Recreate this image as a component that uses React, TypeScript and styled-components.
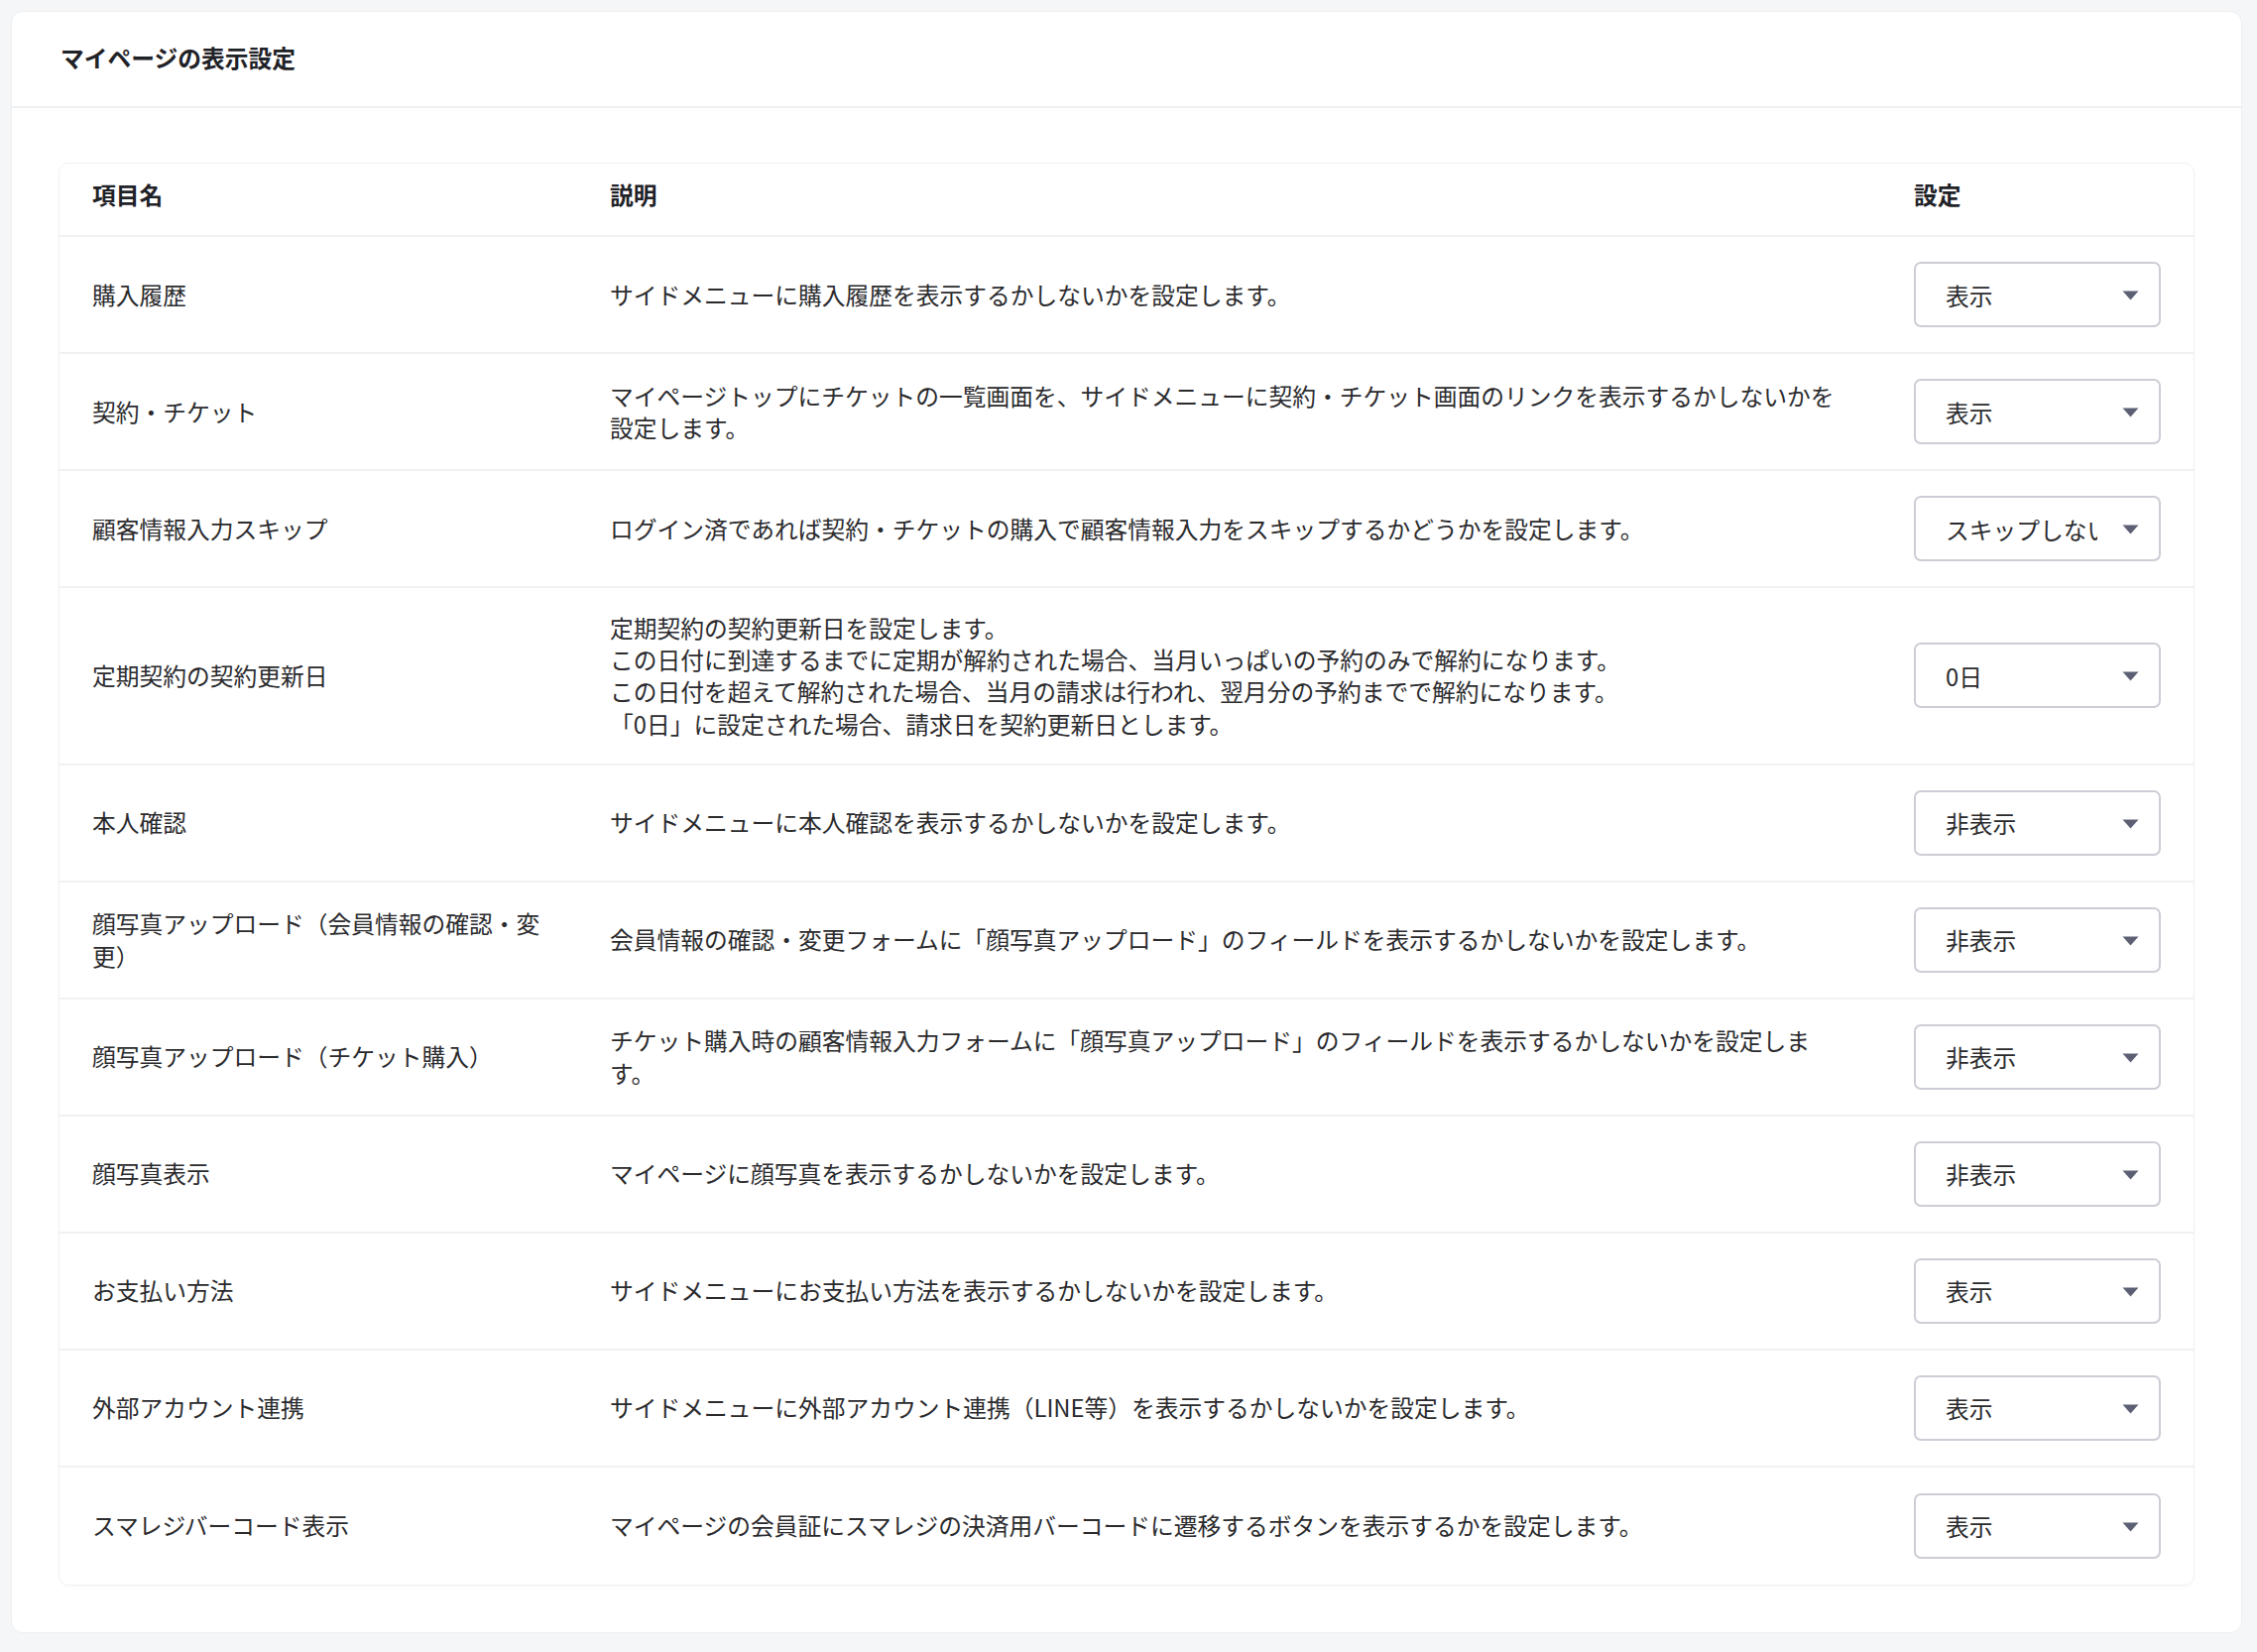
import React from "react";
import styled, { createGlobalStyle } from "styled-components";

const GlobalStyle = createGlobalStyle`
  *, *::before, *::after { box-sizing: border-box; }
  html, body { margin: 0; padding: 0; background: #f5f6f8; }
  body {
    font-family: "Noto Sans CJK JP", "Noto Sans", sans-serif;
    color: #2b2b2e;
  }
`;

const Page = styled.div`
  padding: 11px 15px 22px 11px;
  min-height: 1666px;
`;

const Card = styled.section`
  background: #ffffff;
  border: 1px solid #eceef1;
  border-radius: 12px;
  overflow: hidden;
`;

const CardHeader = styled.header`
  height: 97px;
  display: flex;
  align-items: center;
  padding-left: 49px;
  padding-bottom: 3px;
  border-bottom: 2px solid #eef0f3;
`;

const Title = styled.h1`
  margin: 0;
  font-size: 23.75px;
  font-weight: 700;
  color: #1f2227;
  line-height: 1;
`;

const CardBody = styled.div`
  padding: 55px 47px 47px 47px;
`;

const TableCard = styled.div`
  border: 1px solid #f1f1f4;
  border-radius: 10px;
  box-shadow: 0 1px 2px rgba(20, 20, 40, 0.03);
  overflow: hidden;
`;

const GridRow = styled.div<{ $head?: boolean; $last?: boolean }>`
  display: grid;
  grid-template-columns: 522px 1315px 1fr;
  align-items: center;
  min-height: ${(p) => (p.$head ? "74px" : "118px")};
  padding: ${(p) => (p.$head ? "0" : "23.5px 0")};
  border-bottom: ${(p) => (p.$last ? "none" : "2px solid #f1f1f4")};
`;

const HeadCell = styled.div`
  padding: 0 33px 9px 33px;
  font-size: 23.75px;
  font-weight: 700;
  color: #1f2227;
  line-height: 32.4px;
`;

const Cell = styled.div`
  padding: 0 33px;
  font-size: 23.75px;
  line-height: 32.4px;
  color: #2b2b2e;
  white-space: pre-line;
  line-break: strict;
`;

const SelectWrap = styled.div`
  position: relative;
  width: 249px;
  height: 66px;
`;

const Select = styled.select`
  appearance: none;
  -webkit-appearance: none;
  width: 100%;
  height: 100%;
  border: 2px solid #cdcdd6;
  border-radius: 7px;
  background: #ffffff;
  padding: 0 62px 0 30px;
  font-family: "Noto Sans CJK JP", "Noto Sans", sans-serif;
  font-size: 23.75px;
  color: #2b2b2e;
  outline: none;
`;

const Arrow = styled.svg`
  position: absolute;
  right: 22px;
  top: 50%;
  margin-top: -4px;
  width: 17px;
  height: 10px;
  pointer-events: none;
`;

type Item = { name: string; desc: string; value: string; options: string[] };

const showOpts = ["表示", "非表示"];

const items: Item[] = [
  { name: "購入履歴", desc: "サイドメニューに購入履歴を表示するかしないかを設定します。", value: "表示", options: showOpts },
  {
    name: "契約・チケット",
    desc: "マイページトップにチケットの一覧画面を、サイドメニューに契約・チケット画面のリンクを表示するかしないかを設定します。",
    value: "表示",
    options: showOpts,
  },
  {
    name: "顧客情報入力スキップ",
    desc: "ログイン済であれば契約・チケットの購入で顧客情報入力をスキップするかどうかを設定します。",
    value: "スキップしない",
    options: ["スキップしない", "スキップする"],
  },
  {
    name: "定期契約の契約更新日",
    desc:
      "定期契約の契約更新日を設定します。\nこの日付に到達するまでに定期が解約された場合、当月いっぱいの予約のみで解約になります。\nこの日付を超えて解約された場合、当月の請求は行われ、翌月分の予約までで解約になります。\n「0日」に設定された場合、請求日を契約更新日とします。",
    value: "0日",
    options: ["0日", "1日", "2日", "3日", "4日", "5日"],
  },
  { name: "本人確認", desc: "サイドメニューに本人確認を表示するかしないかを設定します。", value: "非表示", options: showOpts },
  {
    name: "顔写真アップロード（会員情報の確認・変更）",
    desc: "会員情報の確認・変更フォームに「顔写真アップロード」のフィールドを表示するかしないかを設定します。",
    value: "非表示",
    options: showOpts,
  },
  {
    name: "顔写真アップロード（チケット購入）",
    desc: "チケット購入時の顧客情報入力フォームに「顔写真アップロード」のフィールドを表示するかしないかを設定します。",
    value: "非表示",
    options: showOpts,
  },
  { name: "顔写真表示", desc: "マイページに顔写真を表示するかしないかを設定します。", value: "非表示", options: showOpts },
  { name: "お支払い方法", desc: "サイドメニューにお支払い方法を表示するかしないかを設定します。", value: "表示", options: showOpts },
  {
    name: "外部アカウント連携",
    desc: "サイドメニューに外部アカウント連携（LINE等）を表示するかしないかを設定します。",
    value: "表示",
    options: showOpts,
  },
  {
    name: "スマレジバーコード表示",
    desc: "マイページの会員証にスマレジの決済用バーコードに遷移するボタンを表示するかを設定します。",
    value: "表示",
    options: showOpts,
  },
];

function SettingSelect({ value, options }: { value: string; options: string[] }) {
  return (
    <SelectWrap>
      <Select defaultValue={value}>
        {options.map((o) => (
          <option key={o} value={o}>
            {o}
          </option>
        ))}
      </Select>
      <Arrow viewBox="0 0 17 10">
        <path d="M0.5 0.5 L16.5 0.5 L8.5 9.5 Z" fill="#5d6074" />
      </Arrow>
    </SelectWrap>
  );
}

export default function App() {
  return (
    <>
      <GlobalStyle />
      <Page>
        <Card>
          <CardHeader>
            <Title>マイページの表示設定</Title>
          </CardHeader>
          <CardBody>
            <TableCard>
              <GridRow $head>
                <HeadCell>項目名</HeadCell>
                <HeadCell>説明</HeadCell>
                <HeadCell>設定</HeadCell>
              </GridRow>
              {items.map((it, i) => (
                <GridRow key={it.name} $last={i === items.length - 1}>
                  <Cell>{it.name}</Cell>
                  <Cell>{it.desc}</Cell>
                  <Cell>
                    <SettingSelect value={it.value} options={it.options} />
                  </Cell>
                </GridRow>
              ))}
            </TableCard>
          </CardBody>
        </Card>
      </Page>
    </>
  );
}
